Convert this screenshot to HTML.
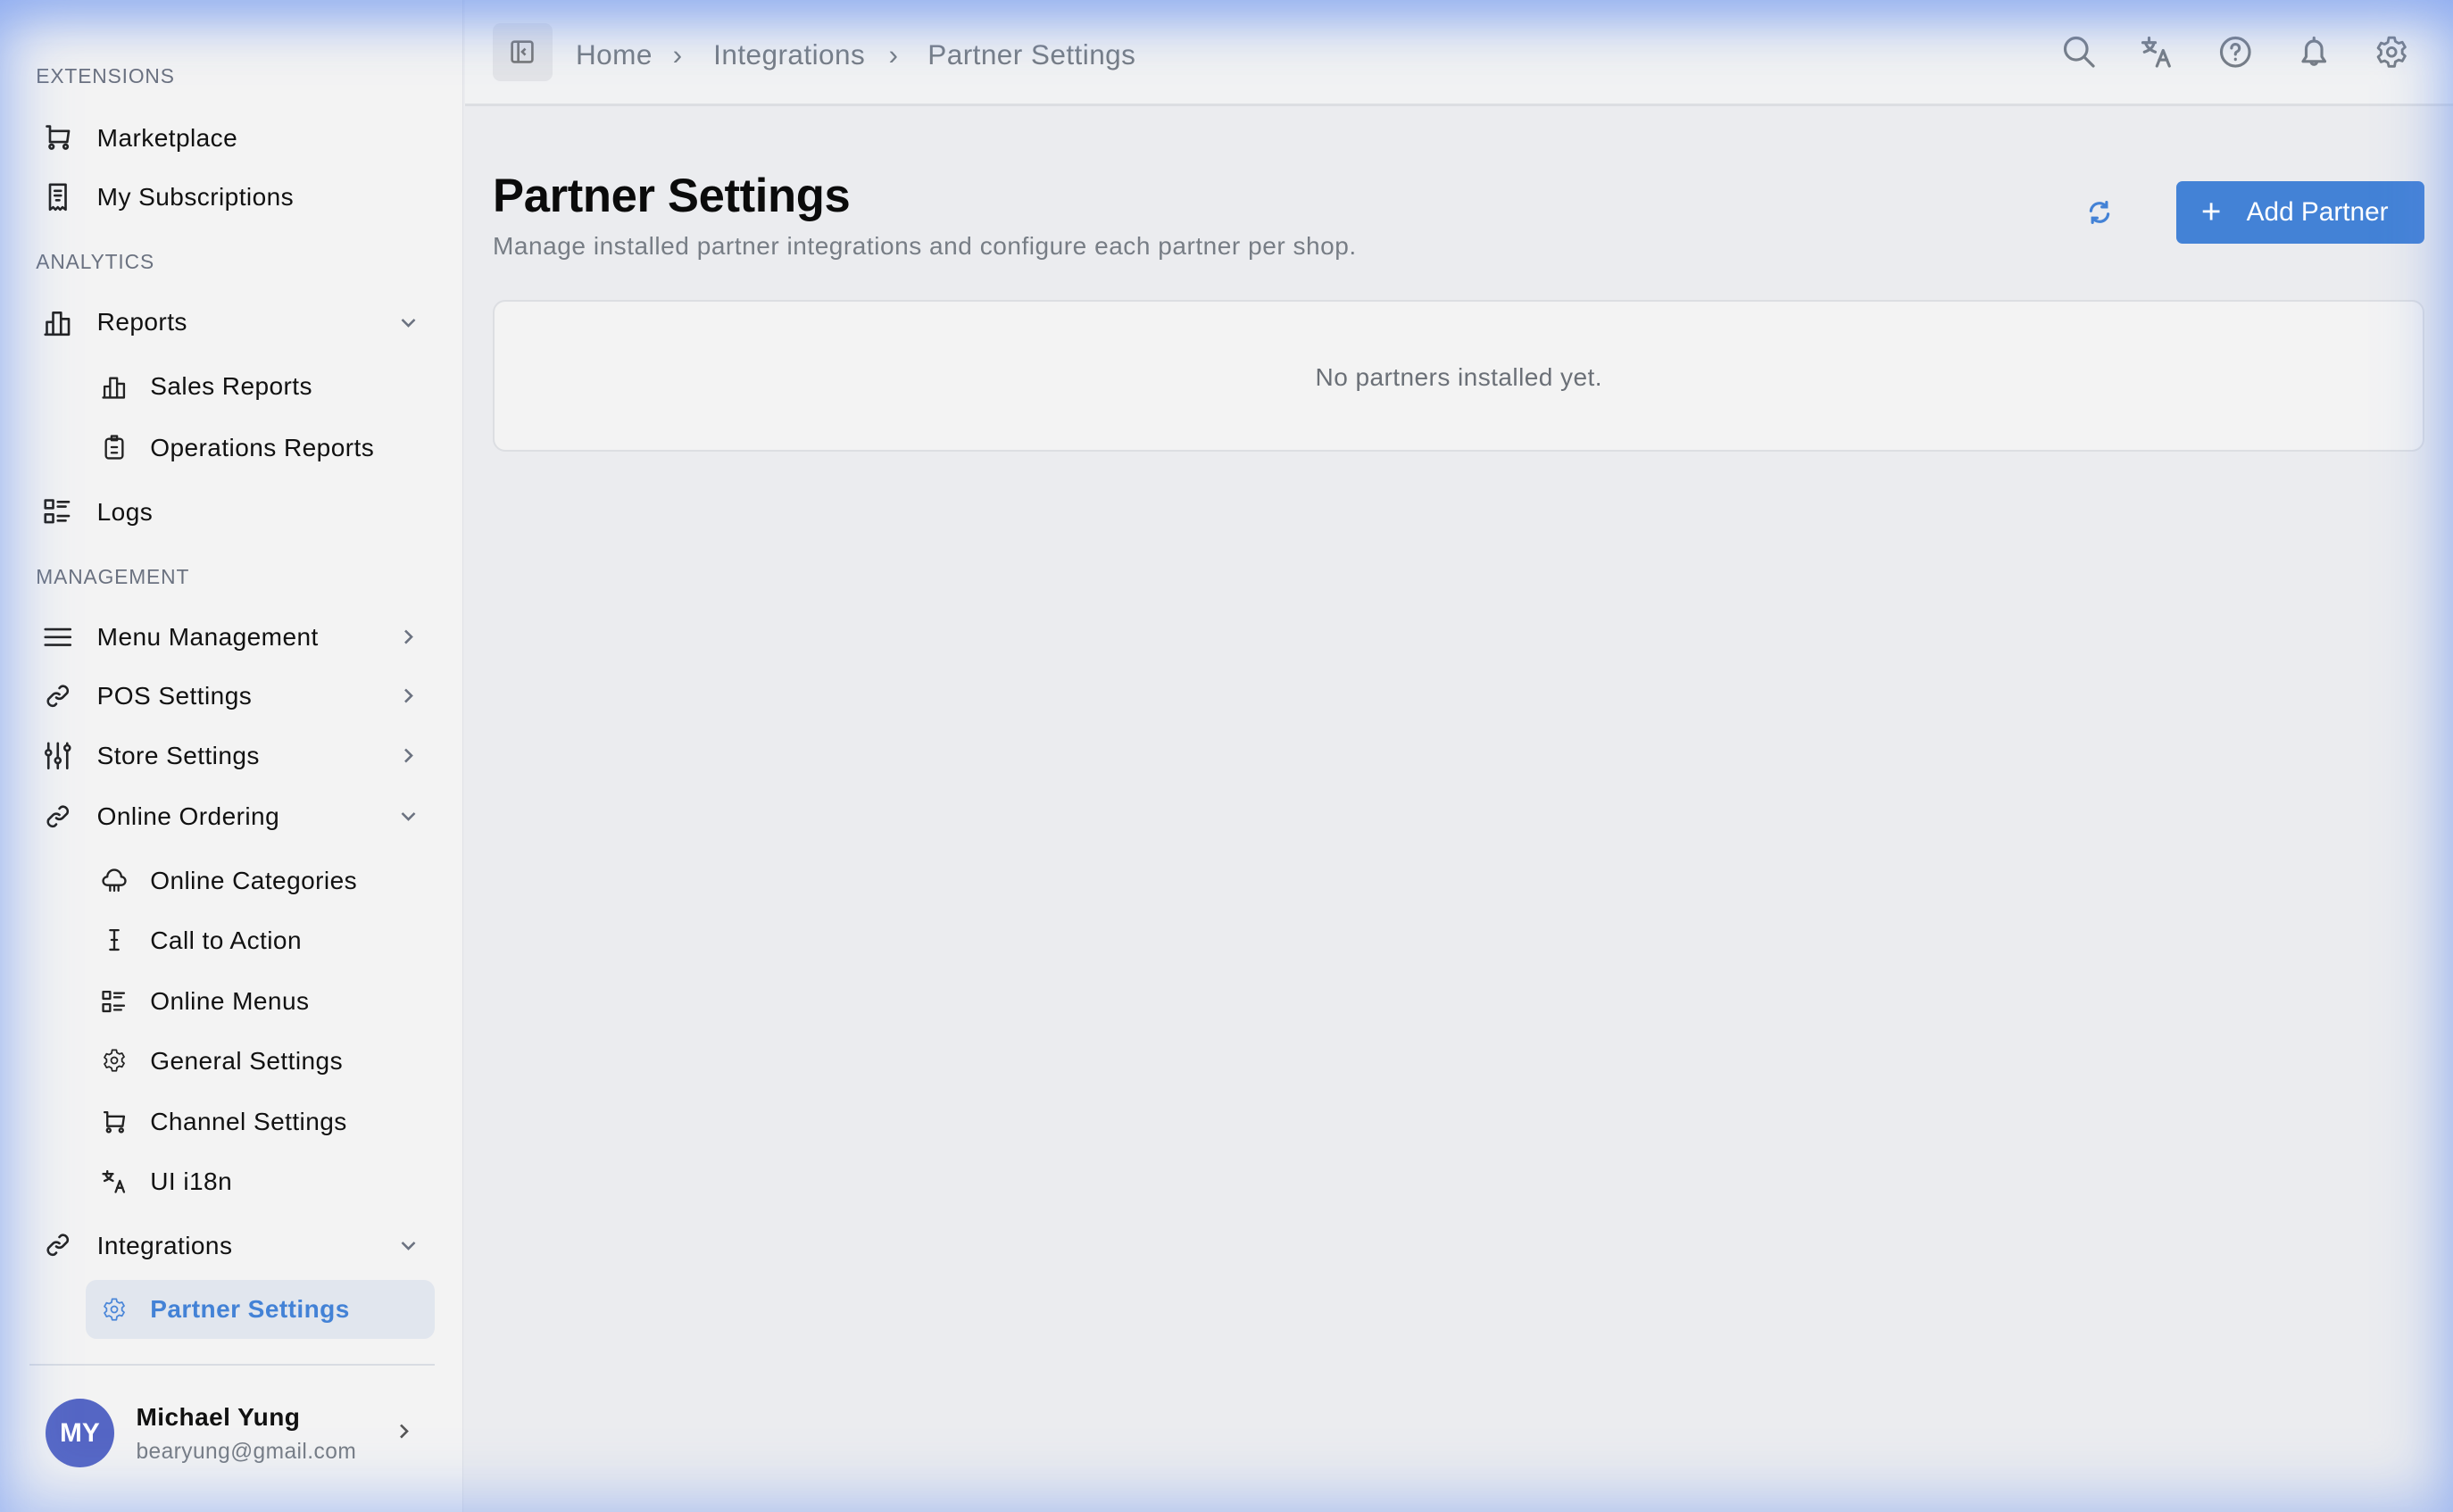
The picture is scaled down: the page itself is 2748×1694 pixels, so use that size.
<!DOCTYPE html>
<html><head><meta charset="utf-8"><style>
*{margin:0;padding:0;box-sizing:border-box}
html,body{width:2748px;height:1694px;overflow:hidden;background:#ebecef}
#r{zoom:1.75255;width:1568px;height:967px;position:relative;font-family:"Liberation Sans",sans-serif;color:#111;background:#ebecef;overflow:hidden}
.sb{position:absolute;left:0;top:0;width:296px;height:967px;background:#f3f3f3;border-right:1px solid #dfe1e5}
.t{position:absolute;font-size:16px;line-height:20px;white-space:nowrap;letter-spacing:.25px}
.sec{position:absolute;left:23px;font-size:13px;color:#6b7280;letter-spacing:.5px}
.ic{position:absolute;width:18px;height:18px;fill:none;stroke:#222;stroke-width:1.5;stroke-linecap:round;stroke-linejoin:round}
.ch{position:absolute;left:255px;width:12px;height:12px;fill:none;stroke:#6b7280;stroke-width:1.5}
.hd{position:absolute;left:297px;top:0;right:0;height:68px;background:#f1f2f3;border-bottom:2px solid #dcdee2}
.hi{position:absolute;top:22px;width:22px;height:22px;fill:none;stroke:#777d85;stroke-width:1.8;stroke-linecap:round;stroke-linejoin:round}
.glow{position:absolute;inset:0;pointer-events:none;box-shadow:inset 0 0 40px 6px rgba(110,150,240,.55),inset 0 22px 30px -10px rgba(110,150,240,.5)}
</style></head><body><div id="r">
<div class="sb">
<div class="sec" style="top:41px">EXTENSIONS</div>
<svg class="ic" style="left:28px;top:79px" viewBox="0 0 18 18"><path d="M2 2h2v10h11l1-7H4"/><circle cx="5" cy="15" r="1.3"/><circle cx="14" cy="15" r="1.3"/></svg>
<div class="t" style="left:62px;top:78px">Marketplace</div>
<svg class="ic" style="left:28px;top:117px" viewBox="0 0 18 18"><path d="M4 1h10v16l-2-1.5-1.5 1.5-1.5-1.5-1.5 1.5L6 15.5 4 17z"/><path d="M7 5h4M7 8h4M8 11h2"/></svg>
<div class="t" style="left:62px;top:116px">My Subscriptions</div>
<div class="sec" style="top:160px">ANALYTICS</div>
<svg class="ic" style="left:28px;top:197px" viewBox="0 0 18 18"><path d="M2 17V9h4v8M6 17V3h5v14M11 17V7h5v10H1"/></svg>
<div class="t" style="left:62px;top:196px">Reports</div>
<svg class="ch" style="top:200px" viewBox="0 0 12 12"><path d="M2 4l4 4 4-4"/></svg>
<svg class="ic" style="left:65px;top:239px;width:16px;height:16px" viewBox="0 0 18 18"><path d="M2 17V9h4v8M6 17V3h5v14M11 17V7h5v10H1"/></svg>
<div class="t" style="left:96px;top:237px">Sales Reports</div>
<svg class="ic" style="left:65px;top:278px;width:16px;height:16px" viewBox="0 0 18 18"><rect x="3" y="3" width="12" height="14" rx="2"/><path d="M7 1h4v3H7zM7 9h4M7 13h4"/></svg>
<div class="t" style="left:96px;top:276px">Operations Reports</div>
<svg class="ic" style="left:28px;top:318px" viewBox="0 0 18 18"><rect x="1" y="2" width="5" height="5"/><rect x="1" y="11" width="5" height="5"/><path d="M9 3h7M9 6h5M9 12h7M9 15h5"/></svg>
<div class="t" style="left:62px;top:317px">Logs</div>
<div class="sec" style="top:361px">MANAGEMENT</div>
<svg class="ic" style="left:28px;top:398px" viewBox="0 0 18 18"><path d="M1 4h16M1 9h16M1 14h16"/></svg>
<div class="t" style="left:62px;top:397px">Menu Management</div>
<svg class="ch" style="top:401px" viewBox="0 0 12 12"><path d="M4 2l4 4-4 4"/></svg>
<svg class="ic" style="left:28px;top:436px" viewBox="0 0 18 18"><path d="M8 10a3 3 0 0 0 4 0l3-3a3 3 0 0 0-4-4l-1 1M10 8a3 3 0 0 0-4 0l-3 3a3 3 0 0 0 4 4l1-1"/></svg>
<div class="t" style="left:62px;top:435px">POS Settings</div>
<svg class="ch" style="top:439px" viewBox="0 0 12 12"><path d="M4 2l4 4-4 4"/></svg>
<svg class="ic" style="left:28px;top:474px" viewBox="0 0 18 18"><path d="M3 1v16M9 1v16M15 1v16"/><circle cx="3" cy="7" r="1.7" fill="#f3f3f3"/><circle cx="9" cy="12" r="1.7" fill="#f3f3f3"/><circle cx="15" cy="4" r="1.7" fill="#f3f3f3"/></svg>
<div class="t" style="left:62px;top:473px">Store Settings</div>
<svg class="ch" style="top:477px" viewBox="0 0 12 12"><path d="M4 2l4 4-4 4"/></svg>
<svg class="ic" style="left:28px;top:513px" viewBox="0 0 18 18"><path d="M8 10a3 3 0 0 0 4 0l3-3a3 3 0 0 0-4-4l-1 1M10 8a3 3 0 0 0-4 0l-3 3a3 3 0 0 0 4 4l1-1"/></svg>
<div class="t" style="left:62px;top:512px">Online Ordering</div>
<svg class="ch" style="top:516px" viewBox="0 0 12 12"><path d="M2 4l4 4 4-4"/></svg>
<svg class="ic" style="left:65px;top:555px;width:16px;height:16px" viewBox="0 0 18 18"><path d="M4 12a3 3 0 0 1 0-6 5 5 0 0 1 10 0 3 3 0 0 1 0 6H4M6 12v4M9 12v4M12 12v4"/></svg>
<div class="t" style="left:96px;top:553px">Online Categories</div>
<svg class="ic" style="left:65px;top:593px;width:16px;height:16px" viewBox="0 0 18 18"><path d="M6 2h6M6 16h6M9 2v14M7 9h4"/></svg>
<div class="t" style="left:96px;top:591px">Call to Action</div>
<svg class="ic" style="left:65px;top:632px;width:16px;height:16px" viewBox="0 0 18 18"><rect x="1" y="2" width="5" height="5"/><rect x="1" y="11" width="5" height="5"/><path d="M9 3h7M9 6h5M9 12h7M9 15h5"/></svg>
<div class="t" style="left:96px;top:630px">Online Menus</div>
<svg class="ic" style="left:65px;top:670px;width:16px;height:16px" viewBox="0 0 24 24"><circle cx="12" cy="12" r="3"/><path d="M10 2h4l.6 2.6 2.3 1.3 2.5-.8 2 3.5-2 1.8v2.6l2 1.8-2 3.5-2.5-.8-2.3 1.3L14 22h-4l-.6-2.6-2.3-1.3-2.5.8-2-3.5 2-1.8v-2.6l-2-1.8 2-3.5 2.5.8 2.3-1.3z"/></svg>
<div class="t" style="left:96px;top:668px">General Settings</div>
<svg class="ic" style="left:65px;top:709px;width:16px;height:16px" viewBox="0 0 18 18"><path d="M2 2h2v10h11l1-7H4"/><circle cx="5" cy="15" r="1.3"/><circle cx="14" cy="15" r="1.3"/></svg>
<div class="t" style="left:96px;top:707px">Channel Settings</div>
<svg class="ic" style="left:65px;top:747px;width:16px;height:16px" viewBox="0 0 18 18"><path d="M1 4h7M4 2v2M2 9c3-1 5-3 5-5M3 5c1 2 3 3 5 4M10 17l3-8 3 8M11 14h4"/></svg>
<div class="t" style="left:96px;top:745px">UI i18n</div>
<svg class="ic" style="left:28px;top:787px" viewBox="0 0 18 18"><path d="M8 10a3 3 0 0 0 4 0l3-3a3 3 0 0 0-4-4l-1 1M10 8a3 3 0 0 0-4 0l-3 3a3 3 0 0 0 4 4l1-1"/></svg>
<div class="t" style="left:62px;top:786px">Integrations</div>
<svg class="ch" style="top:790px" viewBox="0 0 12 12"><path d="M2 4l4 4 4-4"/></svg>
<div style="position:absolute;left:55px;top:818px;width:223px;height:38px;background:#e1e6ee;border-radius:7px"></div>
<svg class="ic" style="left:65px;top:829px;width:16px;height:16px;stroke:#4a86d8" viewBox="0 0 24 24"><circle cx="12" cy="12" r="3"/><path d="M10 2h4l.6 2.6 2.3 1.3 2.5-.8 2 3.5-2 1.8v2.6l2 1.8-2 3.5-2.5-.8-2.3 1.3L14 22h-4l-.6-2.6-2.3-1.3-2.5.8-2-3.5 2-1.8v-2.6l-2-1.8 2-3.5 2.5.8 2.3-1.3z"/></svg>
<div class="t" style="left:96px;top:827px;color:#4382d6;font-weight:bold">Partner Settings</div>
<div style="position:absolute;left:19px;top:872px;width:259px;height:1px;background:#d8dce2"></div>
<div style="position:absolute;left:29px;top:894px;width:44px;height:44px;border-radius:50%;background:#5566c4;color:#fff;font-weight:bold;font-size:17px;line-height:44px;text-align:center">MY</div>
<div class="t" style="left:87px;top:896px;font-weight:bold">Michael Yung</div>
<div class="t" style="left:87px;top:918px;font-size:14px;color:#777d85">bearyung@gmail.com</div>
<svg class="ch" style="left:252px;top:909px;stroke:#555" viewBox="0 0 12 12"><path d="M4 2l4 4-4 4"/></svg>
</div>
<div class="hd"></div>
<div style="position:absolute;left:315px;top:15px;width:38px;height:37px;background:#e3e4e7;border-radius:5px"></div>
<svg style="position:absolute;left:326px;top:25px;width:16px;height:16px;fill:none;stroke:#777;stroke-width:1.5" viewBox="0 0 16 16"><rect x="1.5" y="1.5" width="13" height="13" rx="1.5"/><path d="M5.5 1.5v13M10 6l-2 2 2 2"/></svg>
<div class="t" style="left:368px;top:24px;font-size:18px;line-height:22px;color:#777d85">Home</div>
<div class="t" style="left:430px;top:24px;font-size:18px;line-height:22px;color:#777d85">›</div>
<div class="t" style="left:456px;top:24px;font-size:18px;line-height:22px;color:#777d85">Integrations</div>
<div class="t" style="left:568px;top:24px;font-size:18px;line-height:22px;color:#777d85">›</div>
<div class="t" style="left:593px;top:24px;font-size:18px;line-height:22px;color:#777d85">Partner Settings</div>
<svg class="hi" style="left:1318px" viewBox="0 0 22 22"><circle cx="9" cy="9" r="7"/><path d="M14 14l6 6"/></svg>
<svg class="hi" style="left:1368px" viewBox="0 0 22 22"><path d="M2 5h8M6 2v3M3 11c3-1 6-3 6-6M4 6c1 2 3 4 6 5M11 20l4-10 4 10M12.5 16h5"/></svg>
<svg class="hi" style="left:1418px" viewBox="0 0 22 22"><circle cx="11" cy="11" r="9"/><path d="M8.5 8.5a2.5 2.5 0 1 1 3.5 2.3c-.7.3-1 .9-1 1.7M11 15.5v.3"/></svg>
<svg class="hi" style="left:1468px" viewBox="0 0 22 22"><path d="M4 17h14l-2-3V9a5 5 0 0 0-10 0v5zM9 17a2 2 0 0 0 4 0M11 4V2"/></svg>
<svg class="hi" style="left:1518px" viewBox="0 0 24 24"><circle cx="12" cy="12" r="3"/><path d="M10 2h4l.6 2.6 2.3 1.3 2.5-.8 2 3.5-2 1.8v2.6l2 1.8-2 3.5-2.5-.8-2.3 1.3L14 22h-4l-.6-2.6-2.3-1.3-2.5.8-2-3.5 2-1.8v-2.6l-2-1.8 2-3.5 2.5.8 2.3-1.3z"/></svg>
<div class="t" style="left:315px;top:107px;font-size:30px;line-height:36px;font-weight:bold;color:#0b0b0b;letter-spacing:-.2px">Partner Settings</div>
<div class="t" style="left:315px;top:147px;color:#777d85;letter-spacing:.3px">Manage installed partner integrations and configure each partner per shop.</div>
<svg style="position:absolute;left:1334px;top:128px;width:16px;height:16px;fill:none;stroke:#4382d6;stroke-width:1.8;stroke-linecap:round" viewBox="0 0 16 16"><path d="M2.5 7a5.5 5.5 0 0 1 10-2.5M13.5 9a5.5 5.5 0 0 1-10 2.5M12.5 1.5v3h-3M3.5 14.5v-3h3"/></svg>
<div style="position:absolute;left:1391px;top:116px;width:159px;height:40px;background:#4382d6;border-radius:4px;color:#fff;font-size:17px;line-height:40px"><span style="position:absolute;left:16px;font-size:22px">+</span><span style="position:absolute;left:45px">Add Partner</span></div>
<div style="position:absolute;left:315px;top:192px;width:1235px;height:97px;background:#f3f3f3;border:1.5px solid #dcdee2;border-radius:8px"></div>
<div class="t" style="left:315px;width:1235px;text-align:center;top:231px;color:#6b7077">No partners installed yet.</div>
<div class="glow"></div>
</div></body></html>
